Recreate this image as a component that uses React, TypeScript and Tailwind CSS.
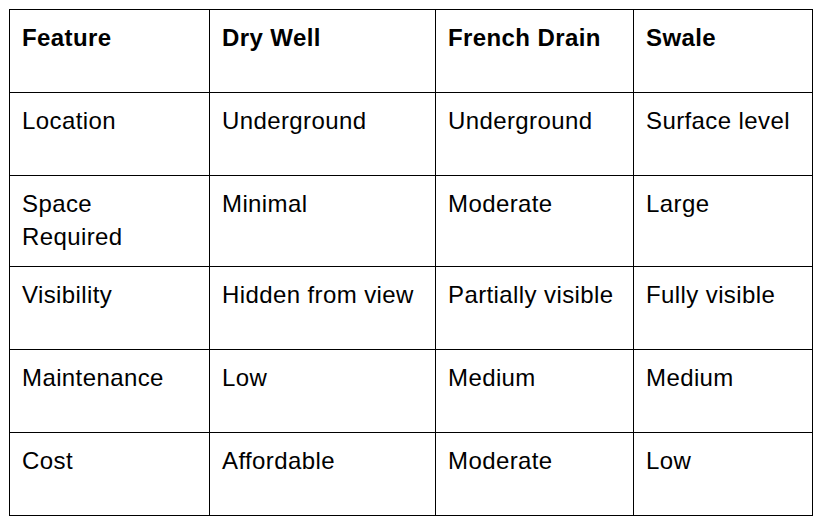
const columns = ["Feature", "Dry Well", "French Drain", "Swale"];

const rows = [
  ["Location", "Underground", "Underground", "Surface level"],
  ["Space Required", "Minimal", "Moderate", "Large"],
  ["Visibility", "Hidden from view", "Partially visible", "Fully visible"],
  ["Maintenance", "Low", "Medium", "Medium"],
  ["Cost", "Affordable", "Moderate", "Low"],
];

const widths = ["w-[200px]", "w-[226px]", "w-[198px]", "w-[179px]"];

const Cell = ({ text, col, bold }: { text: string; col: number; bold?: boolean }) => (
  <div
    className={`${widths[col]} shrink-0 border-r border-b border-black px-3 pt-[11px] pb-[13px] ${
      bold ? "font-bold" : ""
    }`}
  >
    {text}
  </div>
);

const App = () => {
  return (
    <div className="w-[821px] h-[525px] bg-white pt-[9px] pl-[9px]">
      <div
        className="inline-flex flex-col border-l border-t border-black text-black text-[24px] leading-[33px] tracking-[0.4px]"
        style={{ fontFamily: '"Liberation Sans", Arial, sans-serif' }}
      >
        <div className="flex min-h-[83px]">
          {columns.map((c, i) => (
            <Cell key={c} text={c} col={i} bold />
          ))}
        </div>
        {rows.map((r) => (
          <div key={r[0]} className="flex min-h-[83px]">
            {r.map((t, i) => (
              <Cell key={i} text={t} col={i} />
            ))}
          </div>
        ))}
      </div>
    </div>
  );
};

export default App;
